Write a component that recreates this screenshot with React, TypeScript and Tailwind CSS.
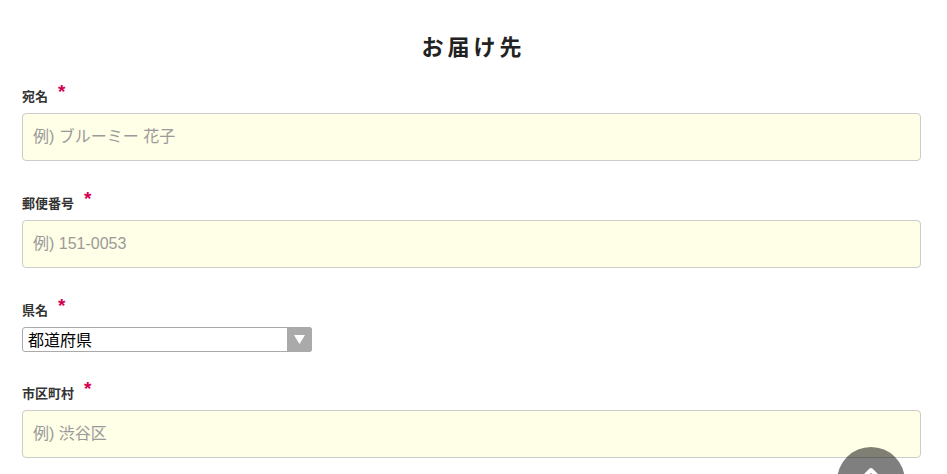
import React, { useState } from 'react';

const fuente = '"Liberation Sans", "Noto Sans CJK JP", sans-serif';

const Etiqueta: React.FC<{ texto: string }> = ({ texto }) => (
  <div className="flex items-center h-[20px] mb-[7px]">
    <span className="text-[13px] font-bold text-[#333] leading-[20px] pt-[2px]">{texto}</span>
    <span className="ml-[10px] -mt-[10px] text-[19px] font-bold leading-none text-[#d5004f]">*</span>
  </div>
);

const Campo: React.FC<{ etiqueta: string; placeholder: string }> = ({ etiqueta, placeholder }) => {
  const [valor, setValor] = useState('');
  return (
    <div className="mb-[32px]">
      <Etiqueta texto={etiqueta} />
      <input
        type="text"
        value={valor}
        onChange={(e) => setValor(e.target.value)}
        placeholder={placeholder}
        className="w-full h-[48px] px-[10px] bg-[#fffee6] border border-[#cccccc] rounded-[4px] text-[16px] text-[#333] placeholder:text-[#9a9a9a] focus:outline-none"
        style={{ fontFamily: fuente }}
      />
    </div>
  );
};

const App: React.FC = () => {
  const [prefectura, setPrefectura] = useState('');

  return (
    <div className="min-h-screen bg-white" style={{ fontFamily: fuente }}>
      <div className="pl-[22px] pr-[26px] pt-[31px]">
        <h2 className="text-center text-[22px] font-bold text-[#222] leading-[33px] tracking-[4px] pl-[4px] mb-[22px]">
          お届け先
        </h2>

        <Campo etiqueta="宛名" placeholder="例) ブルーミー 花子" />
        <Campo etiqueta="郵便番号" placeholder="例) 151-0053" />

        {/* Prefectura */}
        <div className="mb-[31px]">
          <Etiqueta texto="県名" />
          <div className="relative w-[290px] h-[25px]">
            <select
              value={prefectura}
              onChange={(e) => setPrefectura(e.target.value)}
              className="appearance-none w-full h-full pl-[5px] pr-[28px] pt-[2px] bg-white border border-[#aaaaaa] rounded-[3px] text-[16px] leading-[21px] text-black focus:outline-none"
              style={{ fontFamily: fuente }}
            >
              <option value="">都道府県</option>
              <option value="tokyo">東京都</option>
              <option value="osaka">大阪府</option>
            </select>
            <div className="pointer-events-none absolute right-0 top-0 h-full w-[25px] bg-[#aaaaaa] rounded-r-[3px] flex items-center justify-center">
              <svg width="11" height="9" viewBox="0 0 11 9">
                <path d="M0 0 L11 0 L5.5 9 Z" fill="#ffffff" />
              </svg>
            </div>
          </div>
        </div>

        <Campo etiqueta="市区町村" placeholder="例) 渋谷区" />
      </div>

      {/* Botón volver arriba */}
      <button className="fixed right-[42px] bottom-[-41px] w-[68px] h-[68px] rounded-full bg-black/50 flex justify-center pt-[19px]">
        <svg width="22" height="14" viewBox="0 0 22 14">
          <path d="M3 12 L11 4 L19 12" fill="none" stroke="#ffffff" strokeWidth="4" strokeLinecap="round" strokeLinejoin="round" />
        </svg>
      </button>
    </div>
  );
};

export default App;
